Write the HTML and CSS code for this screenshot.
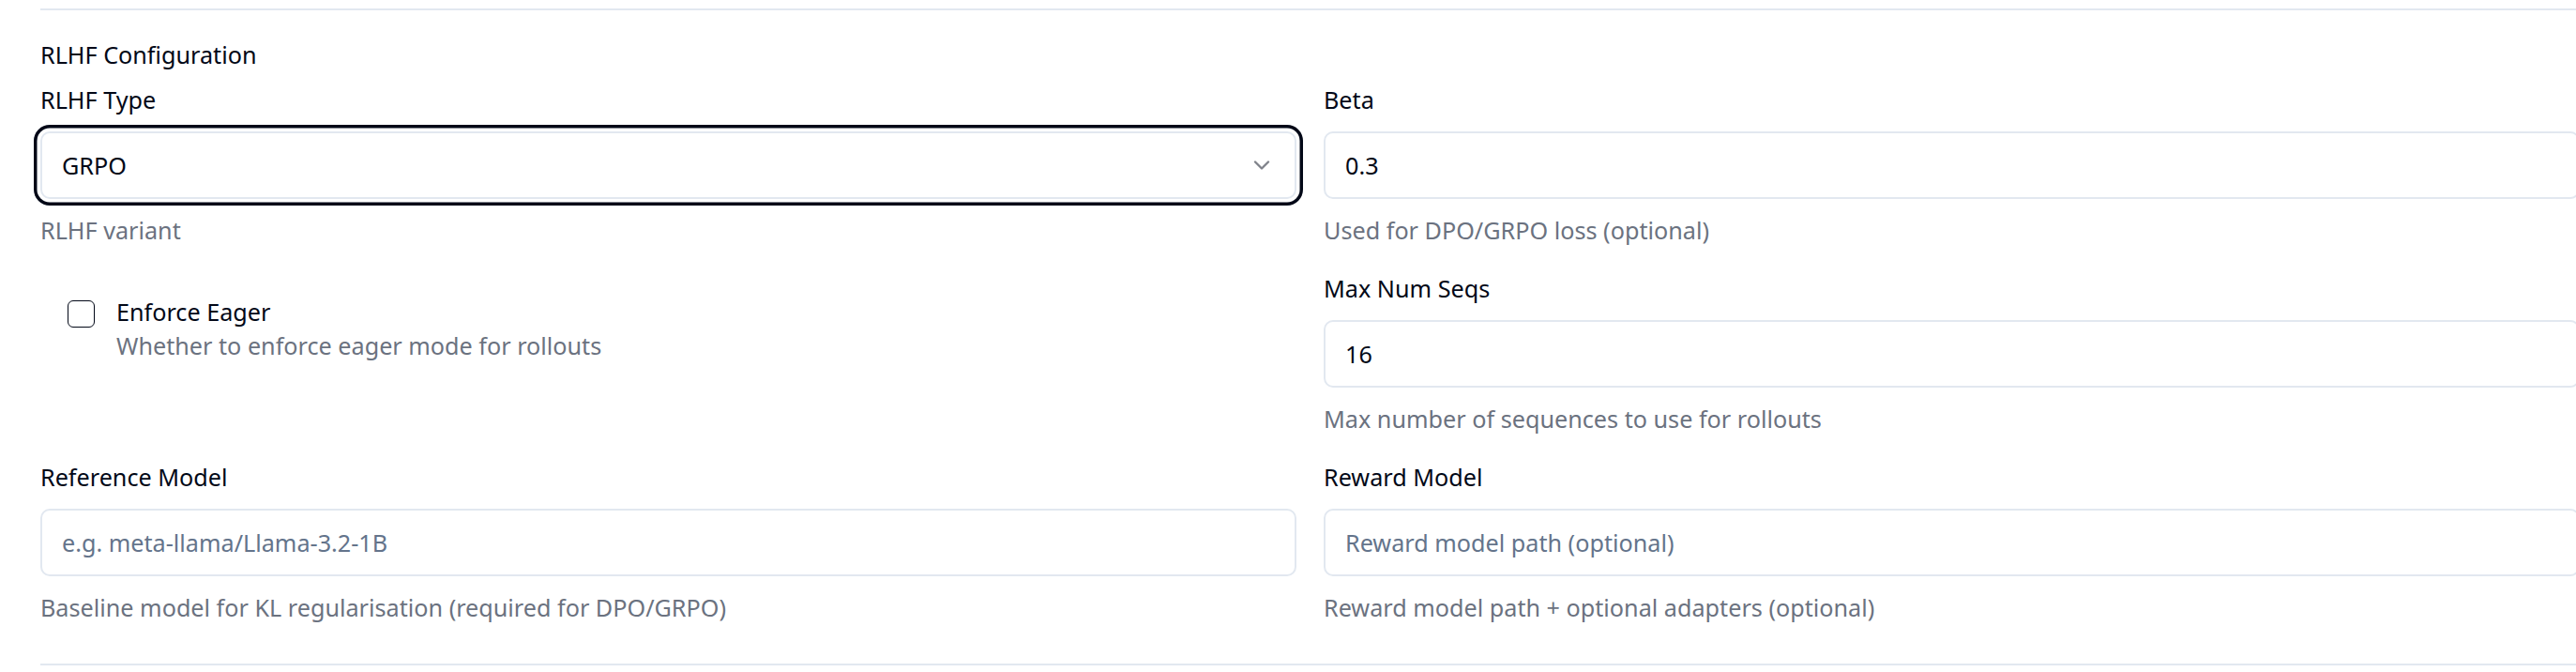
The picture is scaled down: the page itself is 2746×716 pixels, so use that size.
FILE: index.html
```html
<!DOCTYPE html>
<html lang="en">
<head>
<meta charset="utf-8">
<title>RLHF Configuration</title>
<link rel="stylesheet" href="styles.css">
</head>
<body>
<section class="panel">
  <h3 class="panel-title">RLHF Configuration</h3>
  <div class="grid">
    <div class="field">
      <label class="label">RLHF Type</label>
      <button class="select" type="button">
        <span>GRPO</span>
        <svg class="chev" viewBox="0 0 24 24" fill="none" stroke="currentColor" stroke-width="2" stroke-linecap="round" stroke-linejoin="round"><path d="m6 9 6 6 6-6"/></svg>
      </button>
      <p class="desc">RLHF variant</p>
    </div>
    <div class="field">
      <label class="label">Beta</label>
      <input class="input" type="text" value="0.3">
      <p class="desc">Used for DPO/GRPO loss (optional)</p>
    </div>
    <div class="check-cell">
      <span class="checkbox"></span>
      <div class="check-text">
        <label class="label">Enforce Eager</label>
        <p class="check-desc">Whether to enforce eager mode for rollouts</p>
      </div>
    </div>
    <div class="field">
      <label class="label">Max Num Seqs</label>
      <input class="input" type="text" value="16">
      <p class="desc">Max number of sequences to use for rollouts</p>
    </div>
    <div class="field">
      <label class="label">Reference Model</label>
      <input class="input" type="text" placeholder="e.g. meta-llama/Llama-3.2-1B">
      <p class="desc">Baseline model for KL regularisation (required for DPO/GRPO)</p>
    </div>
    <div class="field">
      <label class="label">Reward Model</label>
      <input class="input" type="text" placeholder="Reward model path (optional)">
      <p class="desc">Reward model path + optional adapters (optional)</p>
    </div>
  </div>
</section>
</body>
</html>
```

FILE: styles.css
```css
html, body {
  margin: 0;
  padding: 0;
  background: #ffffff;
  overflow: hidden;
}

body {
  font-family: "Noto Sans", "Open Sans", sans-serif;
  font-size: 25.2px;
  color: #020817;
}

.panel {
  margin: 9px 0 0 43px;
  width: 2707px;
  border-top: 2px solid #e2e8f0;
  border-bottom: 2px solid #e2e8f0;
  padding: 35px 0 46.7px 0;
  box-sizing: border-box;
}

.panel-title {
  margin: 0 0 23px 0;
  font-size: 25.2px;
  line-height: 25.2px;
  font-weight: 450;
  color: #020817;
}

.grid {
  display: grid;
  grid-template-columns: 1339px 1339px;
  column-gap: 29px;
  row-gap: 36.8px;
}

.field {
  display: flex;
  flex-direction: column;
  align-items: stretch;
}

.label {
  display: block;
  font-size: 25.2px;
  line-height: 25.2px;
  font-weight: 450;
  color: #020817;
}

.field .label {
  margin-bottom: 21px;
}

.input,
.select {
  box-sizing: border-box;
  height: 72px;
  width: 100%;
  border: 2px solid #e2e8f0;
  border-radius: 10px;
  background: #ffffff;
  padding: 0 21px;
  font-family: "Noto Sans", "Open Sans", sans-serif;
  font-size: 25.2px;
  color: #020817;
  outline: none;
  margin: 0;
}

.input::placeholder {
  color: #64748b;
  opacity: 1;
}

.select {
  display: flex;
  align-items: center;
  justify-content: space-between;
  text-align: left;
  padding-right: 21px;
  box-shadow: 0 0 0 3.5px #ffffff, 0 0 0 7px #020817;
  cursor: pointer;
}

.chev {
  width: 28px;
  height: 28px;
  color: #020817;
  opacity: 0.5;
  flex: none;
}

.desc {
  margin: 20.8px 0 0 0;
  font-size: 25.2px;
  line-height: 25.2px;
  color: #6b7280;
}

.check-cell {
  display: flex;
  align-items: flex-start;
  gap: 23px;
  padding: 24.7px 0 0 29px;
}

.checkbox {
  flex: none;
  box-sizing: border-box;
  width: 29px;
  height: 29px;
  border: 1.75px solid #020817;
  border-radius: 6px;
  background: #ffffff;
}

.check-text {
  display: flex;
  flex-direction: column;
  gap: 11px;
}

.check-desc {
  margin: 0;
  font-size: 25.2px;
  line-height: 25.2px;
  color: #6b7280;
}
```
